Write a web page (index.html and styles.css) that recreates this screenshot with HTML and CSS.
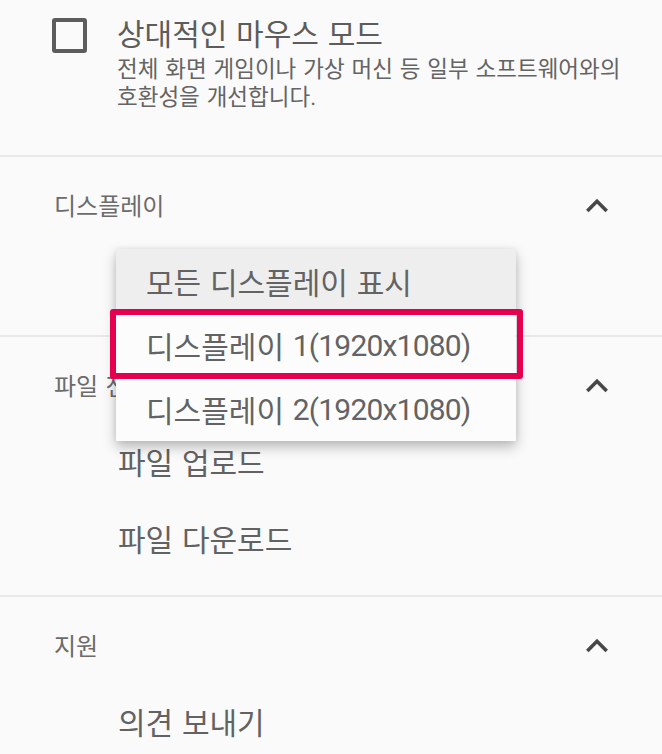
FILE: index.html
```html
<!DOCTYPE html>
<html lang="ko">
<head>
<meta charset="utf-8">
<title>원격 세션 옵션</title>
<link rel="stylesheet" href="styles.css">
</head>
<body>
<div class="panel">
  <section class="option">
    <div class="checkbox" role="checkbox" aria-checked="false"></div>
    <div class="option-text">
      <div class="option-title">상대적인 마우스 모드</div>
      <div class="option-desc">전체 화면 게임이나 가상 머신 등 일부 소프트웨어와의 호환성을 개선합니다.</div>
    </div>
  </section>

  <section class="group">
    <div class="group-header">
      <span class="group-title">디스플레이</span>
      <svg class="chevron" viewBox="0 0 24 24" width="44" height="44"><path d="M12 8l-6 6 1.41 1.41L12 10.83l4.59 4.58L18 14z"/></svg>
    </div>
    <div class="select-row">
      <ul class="menu">
        <li class="menu-item active">모든 디스플레이 표시</li>
        <li class="menu-item selected">디스플레이 <span class="res">1(1920x1080)</span><span class="highlight"></span></li>
        <li class="menu-item">디스플레이 <span class="res">2(1920x1080)</span></li>
      </ul>
    </div>
  </section>

  <section class="group">
    <div class="group-header">
      <span class="group-title">파일 전송</span>
      <svg class="chevron" viewBox="0 0 24 24" width="44" height="44"><path d="M12 8l-6 6 1.41 1.41L12 10.83l4.59 4.58L18 14z"/></svg>
    </div>
    <div class="item">파일 업로드</div>
    <div class="item">파일 다운로드</div>
  </section>

  <section class="group">
    <div class="group-header">
      <span class="group-title">지원</span>
      <svg class="chevron" viewBox="0 0 24 24" width="44" height="44"><path d="M12 8l-6 6 1.41 1.41L12 10.83l4.59 4.58L18 14z"/></svg>
    </div>
    <div class="item">의견 보내기</div>
  </section>
</div>
</body>
</html>
```

FILE: styles.css
```css
html, body {
  margin: 0;
  padding: 0;
  overflow: hidden;
  background: #fafafa;
}

body {
  font-family: Roboto, "Noto Sans CJK KR", sans-serif;
  color: #616161;
  word-spacing: 0.08em;
  word-break: keep-all;
}

.panel {
  width: 662px;
}

.option {
  display: flex;
  align-items: flex-start;
  padding: 18px 0 44px 52px;
  gap: 30px;
}

.checkbox {
  flex: none;
  width: 35px;
  height: 35px;
  box-sizing: border-box;
  border: 4px solid #5c5c5c;
  border-radius: 3px;
}

.option-text {
  width: 525px;
}

.option-title {
  font-size: 30px;
  line-height: 34px;
  color: #5c5c5c;
  margin-bottom: 3px;
}

.option-desc {
  font-size: 22.5px;
  line-height: 28px;
  color: #646464;
}

.group {
  border-top: 2px solid #e8e8e8;
  padding: 9px 0 19px;
}

.group-header {
  height: 76px;
  display: flex;
  align-items: center;
  justify-content: space-between;
  padding: 0 43px 0 54px;
}

.group-title {
  font-size: 24px;
  color: #6b6b6b;
}

.chevron {
  fill: #474747;
  margin-top: 4px;
}

.item {
  height: 77px;
  display: flex;
  align-items: center;
  padding-left: 118px;
  font-size: 30px;
  color: #626262;
}

.select-row {
  position: relative;
  height: 74px;
}

.menu {
  position: absolute;
  top: 7px;
  left: 116px;
  width: 400px;
  margin: 0;
  padding: 0;
  list-style: none;
  background: #fcfcfc;
  box-shadow: 0 6px 12px rgba(0, 0, 0, 0.26), 0 0 5px rgba(0, 0, 0, 0.08);
  z-index: 2;
}

.menu-item {
  position: relative;
  height: 64px;
  display: flex;
  align-items: center;
  padding-left: 30px;
  font-size: 30px;
  color: #636363;
  white-space: pre;
}

.res {
  letter-spacing: -0.8px;
}

.menu-item.active {
  background: #eeeeee;
}

.highlight {
  position: absolute;
  top: -4px;
  bottom: -2px;
  left: -6px;
  right: -7px;
  border: 6px solid #e5004f;
  border-radius: 3px;
  pointer-events: none;
}
```
